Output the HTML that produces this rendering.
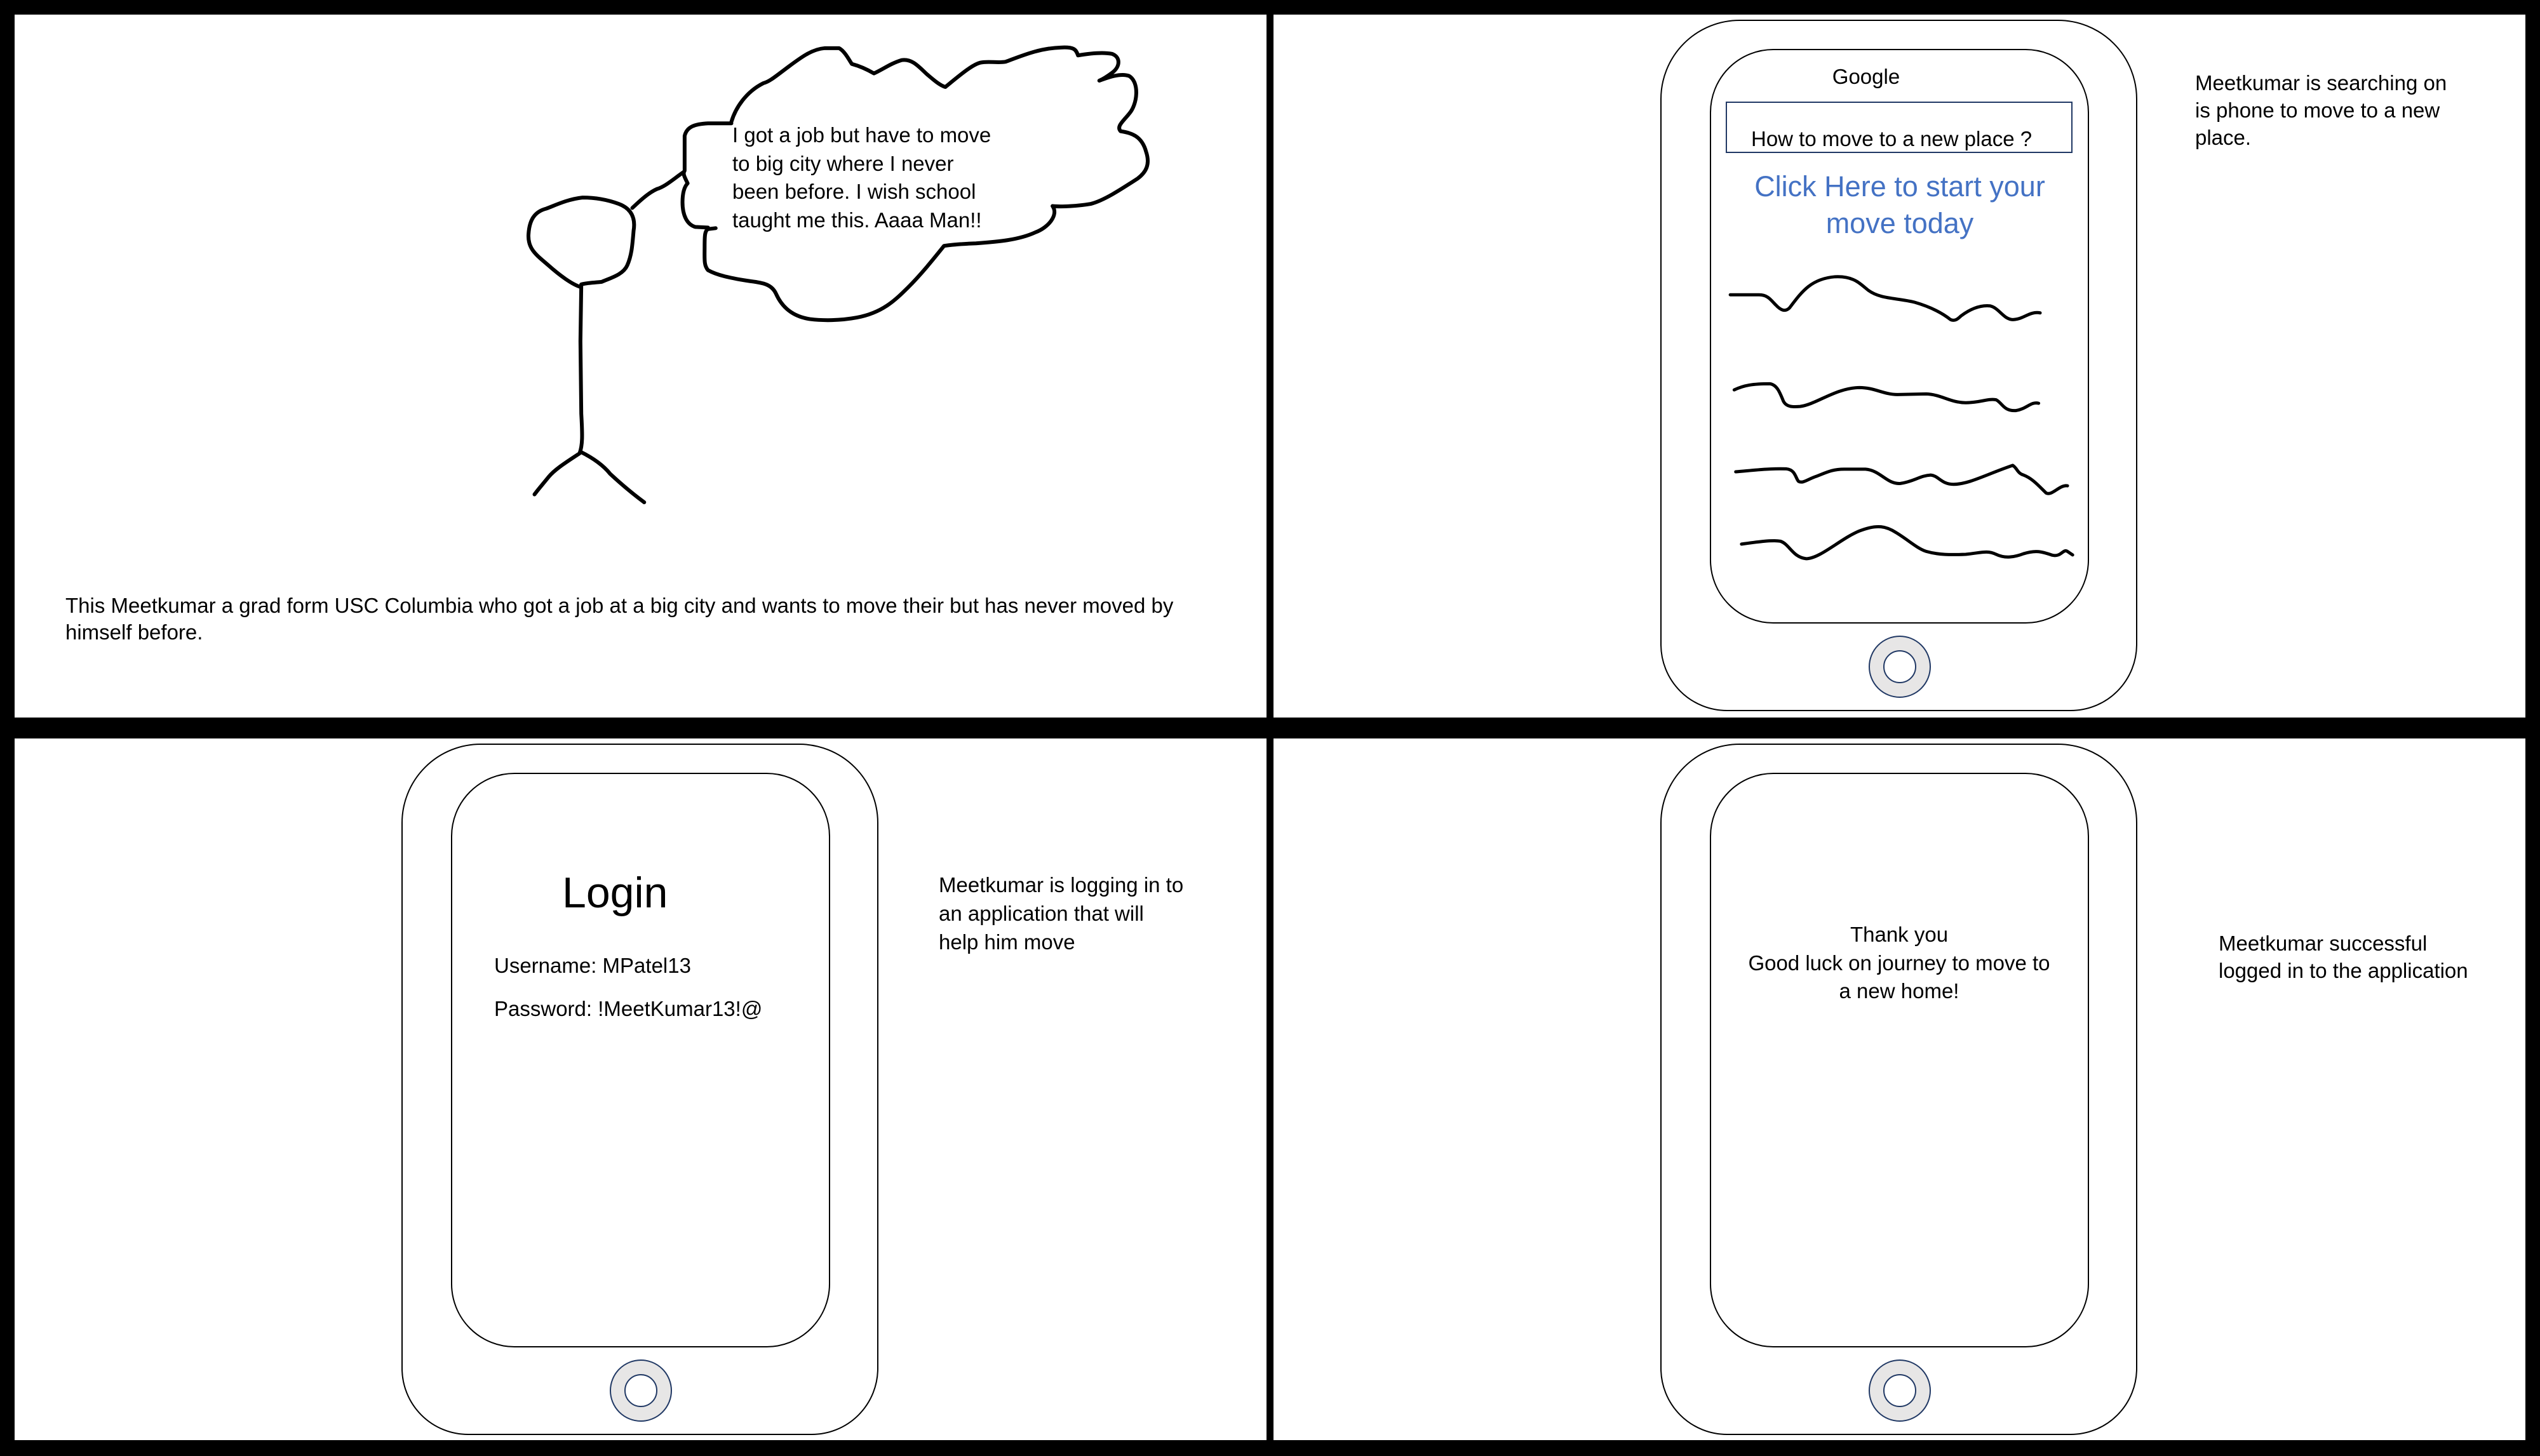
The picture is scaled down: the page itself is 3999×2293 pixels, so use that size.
<!DOCTYPE html>
<html><head><meta charset="utf-8">
<style>
*{margin:0;padding:0;box-sizing:border-box}
html,body{width:3999px;height:2293px;overflow:hidden;background:#000}
body{position:relative;font-family:"Liberation Sans",sans-serif;color:#000}
.p{position:absolute;background:#fff}
.t{position:absolute;white-space:nowrap;font-size:33px;line-height:44px}
.outer{position:absolute;border:2.5px solid #000;border-radius:125px 125px 105px 105px;width:751px;height:1089px;background:#fff}
.inner{position:absolute;border:2.5px solid #000;border-radius:100px;width:597px;height:905px}
.btn{position:absolute;width:98px;height:98px;border-radius:50%;background:#E7E6E6;border:2.5px solid #203864}
.btn i{position:absolute;left:21px;top:21px;width:52px;height:52px;border-radius:50%;background:#fff;border:2.5px solid #203864}
svg{position:absolute;left:0;top:0}
</style></head><body>
<div class="p" style="left:23px;top:23px;width:1971px;height:1107px"></div>
<div class="p" style="left:2005px;top:23px;width:1971px;height:1107px"></div>
<div class="p" style="left:23px;top:1163px;width:1971px;height:1105px"></div>
<div class="p" style="left:2005px;top:1163px;width:1971px;height:1105px"></div>

<!-- Phones -->
<div class="outer" style="left:2614px;top:31px"></div>
<div class="inner" style="left:2692px;top:77px"></div>
<div class="btn" style="left:2942px;top:1001px"><i></i></div>

<div class="outer" style="left:632px;top:1171px"></div>
<div class="inner" style="left:710px;top:1217px"></div>
<div class="btn" style="left:960px;top:2141px"><i></i></div>

<div class="outer" style="left:2614px;top:1171px"></div>
<div class="inner" style="left:2692px;top:1217px"></div>
<div class="btn" style="left:2942px;top:2141px"><i></i></div>

<svg width="3999" height="2293" viewBox="0 0 3999 2293" fill="none" stroke="#000" stroke-linecap="round" stroke-linejoin="round">
<g transform="translate(800,40) scale(0.6696,0.4974)">
<path vector-effect="non-scaling-stroke" stroke-width="6" d="M525,305 C535,260 560,210 600,183 C615,178 630,160 660,130 C690,100 715,75 745,72 L778,72 C790,80 800,105 808,122 C830,130 845,140 860,152 C880,140 900,120 925,110 C950,105 965,130 985,155 C1000,172 1015,190 1028,195 C1060,160 1090,125 1110,118 C1130,112 1150,120 1170,115 C1210,95 1250,72 1300,70 C1330,68 1335,75 1340,95 C1370,88 1400,85 1420,90 C1440,100 1440,130 1420,150 C1405,165 1395,172 1390,175 C1410,165 1440,150 1460,160 C1485,180 1480,250 1460,280 C1445,305 1430,320 1440,335 C1465,340 1490,350 1500,400 C1510,440 1500,465 1480,485 C1440,520 1400,555 1370,565 C1340,572 1300,575 1280,572 C1295,600 1270,640 1240,655 C1200,680 1150,685 1100,690 C1060,692 1040,695 1025,698 C1000,740 970,790 940,830 C910,870 880,910 820,925 C780,935 740,935 710,930 C660,920 640,880 630,850 C620,820 600,815 570,810 C520,800 490,790 470,775 C460,760 462,740 462,700 C462,670 462,650 470,645 L488,642 M470,640 L440,638 C420,630 410,600 410,560 C410,530 415,510 422,500 C415,480 410,470 415,460 L415,350 C420,320 440,312 470,310 L525,310"/>
<path vector-effect="non-scaling-stroke" stroke-width="6" d="M292,578 C310,555 330,530 350,518 C370,510 390,485 412,465"/>
<path vector-effect="non-scaling-stroke" stroke-width="6" d="M170,828 C150,820 120,790 95,760 C70,730 45,710 48,660 C50,620 60,590 90,580 C110,570 140,550 175,545 C210,545 240,555 260,565 C290,580 300,610 295,650 C292,700 290,730 280,760 C270,790 240,800 220,812 C200,815 185,815 172,820"/>
<path vector-effect="non-scaling-stroke" stroke-width="6" d="M172,822 L170,1000 L172,1230 C175,1300 175,1330 168,1355 M168,1355 C140,1380 110,1405 95,1430 C80,1455 70,1470 62,1485 M170,1350 C200,1370 225,1395 240,1420 C260,1445 290,1480 320,1510"/>
</g>
<g transform="translate(2650,400) scale(0.4783,0.4592)">
<path vector-effect="non-scaling-stroke" stroke-width="5" d="M155,140 L250,140 C280,140 290,160 305,175 C320,192 335,200 350,185 C390,130 420,85 500,78 C560,75 580,100 610,125 C650,155 700,150 760,165 C810,180 850,200 880,225 C895,232 905,222 915,212 C950,185 980,175 1010,178 C1040,185 1055,225 1085,225 C1120,225 1140,195 1175,202"/>
<path vector-effect="non-scaling-stroke" stroke-width="5" d="M168,466 C200,450 230,445 285,445 C310,448 320,480 330,505 C340,525 360,525 385,523 C440,515 500,460 580,458 C630,458 660,482 705,482 L800,480 C850,482 880,510 930,510 C980,510 1000,495 1030,500 C1050,510 1055,540 1095,537 C1130,532 1145,505 1170,512"/>
<path vector-effect="non-scaling-stroke" stroke-width="5" d="M173,747 C230,742 280,735 340,737 C370,740 370,770 380,780 C395,788 410,772 440,762 C470,750 490,738 530,738 L600,738 C650,742 670,790 715,787 C760,780 780,760 815,758 C840,760 850,790 890,790 C940,790 1000,755 1085,725 C1100,735 1100,752 1120,758 C1150,770 1170,795 1195,820 C1215,830 1240,790 1265,795"/>
<path vector-effect="non-scaling-stroke" stroke-width="5" d="M192,995 C240,988 290,980 320,985 C350,995 360,1040 405,1045 C450,1045 520,975 580,950 C640,925 670,935 700,955 C740,980 770,1010 800,1020 C840,1032 880,1032 930,1030 C980,1025 1000,1015 1030,1030 C1060,1045 1090,1040 1120,1028 C1160,1015 1180,1020 1215,1033 C1245,1040 1250,1010 1265,1020 L1282,1032"/>
</g>
</svg>

<!-- Panel 1 text -->
<div class="t" style="left:1153px;top:191px;line-height:44.5px">I got a job but have to move<br>to big city where I never<br>been before. I wish school<br>taught me this. Aaaa Man!!</div>
<div class="t" style="left:103px;top:933px;line-height:42px">This Meetkumar a grad form USC Columbia who got a job at a big city and wants to move their but has never moved by<br>himself before.</div>

<!-- Panel 2 text -->
<div class="t" style="left:2838px;top:99px;width:200px;text-align:center">Google</div>
<div style="position:absolute;left:2717px;top:160px;width:546px;height:81px;border:2.5px solid #203864"></div>
<div class="t" style="left:2757px;top:197px">How to move to a new place ?</div>
<div class="t" style="left:2741px;top:265px;width:500px;text-align:center;font-size:45px;line-height:58px;color:#4472C4">Click Here to start your<br>move today</div>
<div class="t" style="left:3456px;top:109px;line-height:43px">Meetkumar is searching on<br>is phone to move to a new<br>place.</div>

<!-- Panel 3 text -->
<div class="t" style="left:885px;top:1366px;font-size:68px;line-height:80px">Login</div>
<div class="t" style="left:778px;top:1499px">Username: MPatel13</div>
<div class="t" style="left:778px;top:1567px">Password: !MeetKumar13!@</div>
<div class="t" style="left:1478px;top:1371px;line-height:45px">Meetkumar is logging in to<br>an application that will<br>help him move</div>

<!-- Panel 4 text -->
<div class="t" style="left:2690px;top:1450px;width:600px;text-align:center;line-height:44.5px">Thank you<br>Good luck on journey to move to<br>a new home!</div>
<div class="t" style="left:3493px;top:1464px;line-height:43px">Meetkumar successful<br>logged in to the application</div>
</body></html>
